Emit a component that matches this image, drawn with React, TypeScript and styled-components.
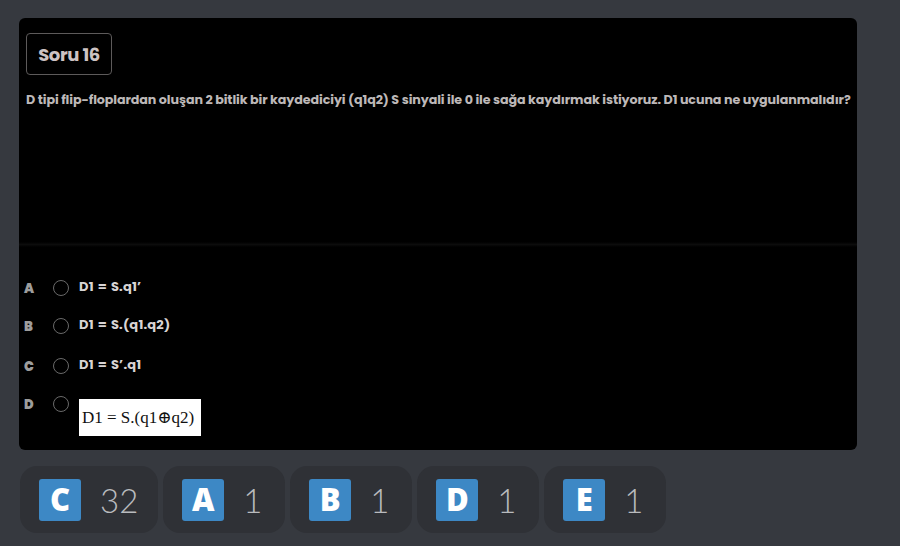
import React from "react";
import styled, { createGlobalStyle } from "styled-components";

const Global = createGlobalStyle`
  html, body { margin: 0; padding: 0; background: #36393f; }
  body { width: 900px; height: 546px; overflow: hidden; }
`;

const Page = styled.div`
  display: flex;
  flex-direction: column;
  padding: 18px 0 0 19px;
  gap: 16px;
`;

const Card = styled.div`
  width: 838px;
  height: 432px;
  background: #000;
  border-radius: 6px;
  display: flex;
  flex-direction: column;
  font-family: "Poppins", Inter, "Noto Sans", sans-serif;
`;

const Top = styled.div`
  height: 224px;
  padding: 15px 7px 0 7px;
  box-sizing: border-box;
`;

const Tag = styled.div`
  width: 86px;
  height: 42px;
  box-sizing: border-box;
  border: 1.5px solid #5d5a5a;
  border-radius: 4px;
  display: flex;
  align-items: center;
  justify-content: center;
  color: #cdc3c3;
  font-weight: 700;
  font-size: 18px;
  letter-spacing: -0.4px;
`;

const Question = styled.p`
  margin: 17px 0 0 0;
  color: #bdb8b8;
  font-weight: 700;
  font-size: 12.7px;
  line-height: 16px;
  letter-spacing: -0.1px;
  white-space: nowrap;
`;

const Divider = styled.div`
  height: 5px;
  background: linear-gradient(#000, #0c0c0c, #000);
`;

const Options = styled.div`
  display: flex;
  flex-direction: column;
  padding: 30px 0 0 5px;
`;

const Row = styled.div<{ $h: number }>`
  display: grid;
  grid-template-columns: 19px 16px auto;
  column-gap: 10px;
  align-items: start;
  height: ${(p) => p.$h}px;
`;

const Letter = styled.span`
  color: #9d9d9d;
  font-weight: 900;
  font-size: 13px;
  line-height: 16px;
  padding-top: 4px;
`;

const Radio = styled.span`
  width: 16px;
  height: 16px;
  box-sizing: border-box;
  border: 1.3px solid #6a6a6a;
  border-radius: 50%;
  margin-top: 3px;
`;

const OptText = styled.span`
  color: #d8d4d4;
  font-weight: 700;
  font-size: 13px;
  line-height: 16px;
  padding-top: 2px;
  letter-spacing: 0.2px;
  word-spacing: 1px;
`;

const ImgBox = styled.div`
  background: #fff;
  width: 122px;
  height: 37px;
  margin-top: 6px;
  display: flex;
  align-items: center;
  padding-left: 3px;
  box-sizing: border-box;
  color: #111;
  font-family: "Liberation Serif", "DejaVu Serif", serif;
  font-size: 17px;
  white-space: nowrap;
`;

const Bar = styled.div`
  display: flex;
  gap: 5px;
  margin-left: 1px;
`;

const Pill = styled.div`
  height: 67px;
  box-sizing: border-box;
  background: #2f3136;
  border-radius: 17px;
  display: flex;
  align-items: center;
  padding: 0 20px 0 19px;
  gap: 19px;
`;

const Badge = styled.span`
  width: 42px;
  height: 42px;
  border-radius: 3px;
  background: #3d88c5;
  color: #fff;
  font-family: "Open Sans", "Noto Sans", sans-serif;
  font-weight: 800;
  font-size: 31px;
  display: flex;
  align-items: center;
  justify-content: center;
  line-height: 1;
`;

const Count = styled.span`
  color: #b9bbbe;
  font-family: Lato, "Liberation Sans", Arial, sans-serif;
  font-size: 33px;
  font-weight: 300;
  min-width: 22px;
`;

const options = [
  { l: "A", t: "D1 = S.q1’", h: 38 },
  { l: "B", t: "D1 = S.(q1.q2)", h: 40 },
  { l: "C", t: "D1 = S’.q1", h: 38 },
];

const votes = [
  { l: "C", n: 32 },
  { l: "A", n: 1 },
  { l: "B", n: 1 },
  { l: "D", n: 1 },
  { l: "E", n: 1 },
];

export default function App() {
  return (
    <>
      <Global />
      <Page>
        <Card>
          <Top>
            <Tag>Soru 16</Tag>
            <Question>
              D tipi flip-floplardan oluşan 2 bitlik bir kaydediciyi (q1q2) S sinyali ile 0 ile sağa kaydırmak istiyoruz. D1 ucuna ne uygulanmalıdır?
            </Question>
          </Top>
          <Divider />
          <Options>
            {options.map((o) => (
              <Row key={o.l} $h={o.h}>
                <Letter>{o.l}</Letter>
                <Radio />
                <OptText>{o.t}</OptText>
              </Row>
            ))}
            <Row $h={40}>
              <Letter>D</Letter>
              <Radio />
              <ImgBox>D1 = S.(q1⊕q2)</ImgBox>
            </Row>
          </Options>
        </Card>
        <Bar>
          {votes.map((v) => (
            <Pill key={v.l}>
              <Badge>{v.l}</Badge>
              <Count>{v.n}</Count>
            </Pill>
          ))}
        </Bar>
      </Page>
    </>
  );
}
